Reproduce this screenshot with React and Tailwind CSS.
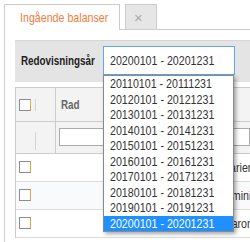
import React from "react";

const years = [
  "20110101 - 20111231",
  "20120101 - 20121231",
  "20130101 - 20131231",
  "20140101 - 20141231",
  "20150101 - 20151231",
  "20160101 - 20161231",
  "20170101 - 20171231",
  "20180101 - 20181231",
  "20190101 - 20191231",
  "20200101 - 20201231",
];

const rows = ["Inventarier", "HR-administration", "Kaffebaron"];

// Arial Narrow is not installed: squeeze Liberation Sans to its width
function Narrow({ children, className = "" }) {
  return (
    <span className={"inline-block origin-left scale-x-[0.82] whitespace-nowrap " + className}>
      {children}
    </span>
  );
}

function Checkbox() {
  return (
    <span className="block w-[12px] h-[12px] bg-white border border-[#8a8c9c] border-r-[#e3a443]" />
  );
}

export default function App() {
  return (
    <div className="w-[250px] h-[242px] overflow-hidden bg-white font-['Liberation_Sans',Arial,sans-serif] text-[13px] text-[#333]">
      {/* Tabs */}
      <div className="flex items-end h-[30px] pl-[4px] pt-[4px]">
        <div className="flex items-end h-full border-b border-[#ccc]">
          <div className="h-[26px] w-[116px] -mb-px bg-white border border-b-0 border-[#ccc] pl-[15px] flex items-center text-[13px] text-[#f57c3d]">
            <Narrow>Ingående balanser</Narrow>
          </div>
        </div>
        <div className="w-[5px] h-full border-b border-[#ccc]" />
        <div className="h-[26px] w-[32px] bg-[#e6e6e6] border border-[#ccc] flex items-center pl-[8px] text-[#aaa] text-[15px] leading-none">
          ×
        </div>
        <div className="flex-1 h-full border-b border-[#ccc]" />
      </div>

      {/* Content */}
      <div className="ml-[4px] border-l border-[#ccc] pl-[10px] pt-[10px] h-[212px]">
        {/* Filter panel */}
        <div className="h-[42px] bg-[#e4e4e4] border-t border-[#d6d6d6] flex items-start pt-[5px] pl-[6px]">
          <div className="w-[82px] shrink-0 h-[29px] flex items-center font-bold text-[12px] text-[#222]">
            <Narrow>Redovisningsår</Narrow>
          </div>
          <div className="relative z-10 shrink-0">
            <div className="w-[132px] h-[29px] bg-white border border-[#62a6e8] flex items-center justify-between pl-[6px] pr-[5px]">
              <Narrow>20200101 - 20201231</Narrow>
              <svg width="11" height="7" viewBox="0 0 11 7">
                <polyline points="1.5,1.5 5.5,5.2 9.5,1.5" fill="none" stroke="#333" strokeWidth="2.2" />
              </svg>
            </div>
            <div className="absolute left-0 top-[29px] w-[131px] bg-white border border-[#8a8a8a] shadow-[2px_2px_4px_rgba(0,0,0,0.35)]">
              {years.map((y, i) => (
                <div
                  key={y}
                  className={
                    i === years.length - 1
                      ? "h-[15.5px] flex items-center pl-[6px] bg-[#1e90ff] text-white"
                      : "h-[15.5px] flex items-center pl-[6px]"
                  }
                >
                  <Narrow>{y}</Narrow>
                </div>
              ))}
            </div>
          </div>
        </div>

        {/* Table */}
        <div className="mt-[5px] border-l border-t border-[#ccc]">
          <div className="flex h-[34px] bg-[#f3f3f3] border-b border-[#ccc]">
            <div className="w-[40px] shrink-0 flex items-center pl-[3px] border-r border-[#ccc]">
              <Checkbox />
              <span className="ml-[4px] w-px h-[12px] bg-[#d4d4d4]" />
            </div>
            <div className="flex-1 flex items-center pl-[5px] font-bold text-[12px] text-[#666]">
              <Narrow>Rad</Narrow>
            </div>
          </div>
          <div className="flex h-[32px] bg-[#f3f3f3] border-b border-[#ccc]">
            <div className="w-[40px] shrink-0 flex items-end pb-[3px] pl-[19px] border-r border-[#ccc]">
              <span className="w-px h-[18px] bg-[#d4d4d4]" />
            </div>
            <div className="flex-1 pl-[3px] pt-[6px]">
              <div className="h-[18px] bg-white border border-[#aaa]" />
            </div>
          </div>
          {rows.map((r, i) => (
            <div
              key={r}
              className={
                i === 1
                  ? "flex h-[28px] items-start pt-[7px] border-b border-[#ddd] bg-[#f9fafc]"
                  : "flex h-[28px] items-start pt-[7px] border-b border-[#ddd]"
              }
            >
              <div className="w-[40px] shrink-0 pl-[3px]">
                <Checkbox />
              </div>
              <div className="shrink-0 pl-[145px] text-[#333] leading-[13px]">
                <Narrow>{r}</Narrow>
              </div>
            </div>
          ))}
        </div>
      </div>
    </div>
  );
}
